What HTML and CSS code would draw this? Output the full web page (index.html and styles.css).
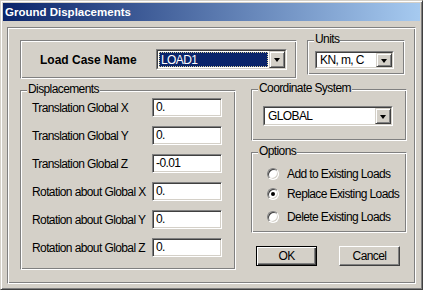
FILE: index.html
```html
<!DOCTYPE html>
<html>
<head>
<meta charset="utf-8">
<link rel="stylesheet" href="styles.css">
</head>
<body>
<div class="window">
  <div class="titlebar"><span class="title">Ground Displacements</span></div>
  <div class="panel">
    <div class="row-top">
      <div class="group group-loadcase">
        <span class="lc-label">Load Case Name</span>
        <div class="combo combo-loadcase">
          <div class="combo-inner">
            <div class="combo-value"><span class="selected">LOAD1</span></div>
            <div class="combo-btn"><span class="tri"></span></div>
          </div>
        </div>
      </div>
      <div class="group group-units">
        <span class="legend">Units</span>
        <div class="combo combo-units">
          <div class="combo-inner">
            <div class="combo-value"><span class="plain">KN, m, C</span></div>
            <div class="combo-btn"><span class="tri"></span></div>
          </div>
        </div>
      </div>
    </div>
    <div class="row-main">
      <div class="group group-disp">
        <span class="legend">Displacements</span>
        <div class="field-list">
          <div class="field"><span class="field-label">Translation Global X</span><div class="input">0.</div></div>
          <div class="field"><span class="field-label">Translation Global Y</span><div class="input">0.</div></div>
          <div class="field"><span class="field-label">Translation Global Z</span><div class="input">-0.01</div></div>
          <div class="field"><span class="field-label">Rotation about Global X</span><div class="input">0.</div></div>
          <div class="field"><span class="field-label">Rotation about Global Y</span><div class="input">0.</div></div>
          <div class="field"><span class="field-label">Rotation about Global Z</span><div class="input">0.</div></div>
        </div>
      </div>
      <div class="side">
        <div class="group group-coord">
          <span class="legend">Coordinate System</span>
          <div class="combo combo-coord">
            <div class="combo-inner">
              <div class="combo-value"><span class="plain">GLOBAL</span></div>
              <div class="combo-btn"><span class="tri"></span></div>
            </div>
          </div>
        </div>
        <div class="group group-options">
          <span class="legend">Options</span>
          <div class="radio-list">
            <div class="radio-row"><span class="radio"></span><span class="radio-label">Add to Existing Loads</span></div>
            <div class="radio-row"><span class="radio checked"></span><span class="radio-label">Replace Existing Loads</span></div>
            <div class="radio-row radio-row-last"><span class="radio"></span><span class="radio-label">Delete Existing Loads</span></div>
          </div>
        </div>
        <div class="buttons">
          <div class="btn btn-default">OK</div>
          <div class="btn">Cancel</div>
        </div>
      </div>
    </div>
  </div>
</div>
</body>
</html>
```
FILE: styles.css
```css
html, body {
  margin: 0;
  padding: 0;
  background: #d4d0c8;
}
* { box-sizing: border-box; }

.window {
  width: 423px;
  height: 290px;
  background: #d4d0c8;
  border: 1px solid;
  border-color: #d4d0c8 #404040 #404040 #d4d0c8;
  box-shadow: inset 1px 1px #fff, inset -1px -1px #808080;
  padding: 2px;
  font-family: "Liberation Sans", Arial, sans-serif;
  font-size: 12px;
  letter-spacing: -0.6px;
  white-space: nowrap;
  color: #000;
}

.titlebar {
  height: 18px;
  background: linear-gradient(to right, #0a246a, #a6caf0);
  padding-left: 2px;
  display: flex;
  align-items: center;
}
.title {
  color: #fff;
  font-weight: bold;
  font-size: 11.5px;
  letter-spacing: 0;
}

.panel {
  margin: 6px 4px 0 4px;
  height: 257px;
  border: 1px solid;
  border-color: #808080 #fff #fff #808080;
  box-shadow: inset 1px 1px #fff, inset -1px -1px #808080;
  padding: 12px 0 0 12px;
}

.group {
  position: relative;
  border: 1px solid;
  border-color: #808080 #fff #fff #808080;
  box-shadow: inset 1px 1px #fff, inset -1px -1px #808080;
}
.legend {
  position: absolute;
  top: -9px;
  left: 6px;
  padding: 0 1px;
  line-height: 15px;
  background: #d4d0c8;
}

.row-top {
  display: flex;
  align-items: flex-start;
  gap: 10px;
}
.group-loadcase {
  width: 277px;
  height: 39px;
  display: flex;
  align-items: center;
  justify-content: space-between;
  padding: 0 9px 0 19px;
}
.lc-label {
  font-weight: bold;
  font-size: 12px;
  letter-spacing: 0;
}
.group-units {
  width: 98px;
  height: 35px;
  padding: 10px 0 0 7px;
}

.combo {
  border: 1px solid;
  border-color: #808080 #fff #fff #808080;
  background: #fff;
}
.combo-inner {
  height: 100%;
  border: 1px solid;
  border-color: #404040 #d4d0c8 #d4d0c8 #404040;
  display: flex;
}
.combo-value {
  flex: 1;
  display: flex;
  align-items: center;
  padding: 1px;
}
.combo-btn {
  width: 16px;
  background: #d4d0c8;
  border: 1px solid;
  border-color: #d4d0c8 #404040 #404040 #d4d0c8;
  box-shadow: inset 1px 1px #fff, inset -1px -1px #808080;
  display: flex;
  align-items: center;
  justify-content: center;
}
.tri {
  width: 0;
  height: 0;
  border-left: 3.5px solid transparent;
  border-right: 3.5px solid transparent;
  border-top: 4px solid #000;
  margin-top: 1px;
}
.selected {
  flex: 1;
  align-self: stretch;
  background: #0a246a;
  color: #fff;
  border: 1px dotted #d8cf9a;
  padding-left: 1px;
  line-height: 14px;
}
.plain {
  padding-left: 2px;
  line-height: 14px;
}
.combo-loadcase {
  width: 131px;
  height: 21px;
}
.combo-units {
  width: 79px;
  height: 18px;
}
.combo-coord {
  width: 130px;
  height: 20px;
}

.row-main {
  display: flex;
  align-items: flex-start;
  gap: 15px;
  margin-top: 11px;
}
.group-disp {
  width: 216px;
  height: 180px;
  padding: 7px 0 0 11px;
}
.field-list {
  display: flex;
  flex-direction: column;
  gap: 9px;
}
.field {
  display: grid;
  grid-template-columns: 120px 70px;
  align-items: center;
}
.input {
  height: 19px;
  background: #fff;
  border: 1px solid;
  border-color: #808080 #fff #fff #808080;
  box-shadow: inset 1px 1px #404040, inset -1px -1px #d4d0c8;
  padding-left: 3px;
  line-height: 17px;
}

.side {
  width: 156px;
  display: flex;
  flex-direction: column;
  margin-top: -1px;
}
.group-coord {
  height: 52px;
  padding: 16px 0 0 11px;
}
.group-options {
  height: 81px;
  margin-top: 11px;
  padding: 14px 0 0 15px;
}
.radio-list {
  display: flex;
  flex-direction: column;
  gap: 6px;
}
.radio-row {
  display: flex;
  align-items: center;
  gap: 8px;
  height: 14px;
}
.radio-row-last {
  margin-top: 3px;
}
.radio {
  width: 12px;
  height: 12px;
  border-radius: 50%;
  background: #fff;
  border: 1px solid;
  border-color: #808080 #fff #fff #808080;
  box-shadow: inset 1px 1px #404040, inset -1px -1px #d4d0c8;
  display: flex;
  align-items: center;
  justify-content: center;
}
.radio.checked::after {
  content: "";
  width: 4px;
  height: 4px;
  border-radius: 50%;
  background: #000;
}

.buttons {
  display: flex;
  gap: 22px;
  margin-top: 13px;
  padding-left: 5px;
}
.btn {
  width: 61px;
  height: 20px;
  background: #d4d0c8;
  border: 1px solid;
  border-color: #fff #404040 #404040 #fff;
  box-shadow: inset -1px -1px #808080;
  display: flex;
  align-items: center;
  justify-content: center;
}
.btn-default {
  border-color: #000;
  box-shadow: inset 1px 1px #fff, inset -1px -1px #404040, inset -2px -2px #808080;
}
```
